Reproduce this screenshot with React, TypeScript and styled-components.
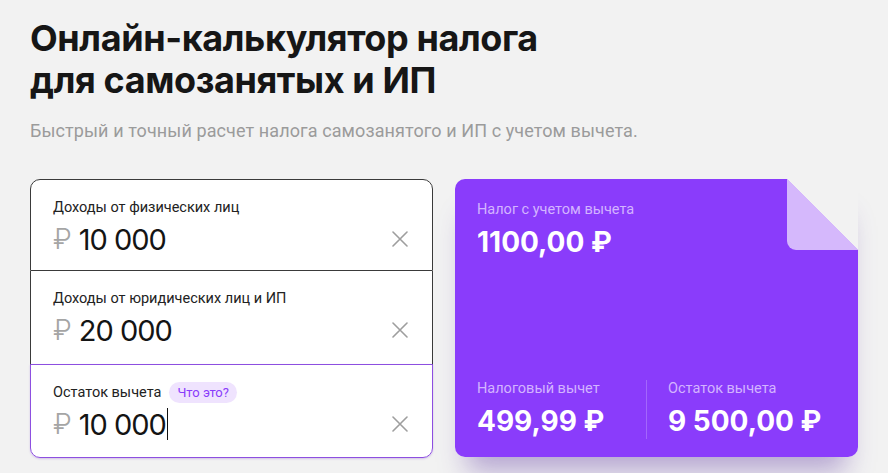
import React from "react";
import styled, { createGlobalStyle } from "styled-components";

const Global = createGlobalStyle`
  html, body { margin: 0; padding: 0; background: #f2f2f2; }
  body { font-family: Inter, "Noto Sans", sans-serif; color: #1a1a1a; }
  * { box-sizing: border-box; }
`;

const Page = styled.div`
  padding: 17px 30px 0 30px;
  width: 888px;
  height: 473px;
  overflow: hidden;
`;

const Title = styled.h1`
  margin: 0;
  font-size: 36px;
  line-height: 42px;
  font-weight: 700;
  letter-spacing: -0.4px;
  color: #161616;
`;

const Subtitle = styled.p`
  margin: 19px 0 0 0;
  font-size: 18px;
  line-height: 22px;
  letter-spacing: 0.1px;
  color: #9b9b9b;
  font-family: Roboto, "Noto Sans", sans-serif;
`;

const Grid = styled.div`
  margin-top: 37px;
  display: grid;
  grid-template-columns: 403px 403px;
  column-gap: 22px;
`;

const Inputs = styled.div`
  display: flex;
  flex-direction: column;
  border-radius: 10px;
  background: #fff;
`;

const Field = styled.div<{ $pos: "top" | "mid" | "bottom"; $active?: boolean }>`
  position: relative;
  height: ${(p) => (p.$pos === "top" ? 92 : 94)}px;
  padding: 17px 22px 0 22px;
  border: 1px solid ${(p) => (p.$active ? "#8d4fe0" : "#3a3a3a")};
  border-top-width: ${(p) => (p.$pos === "top" || p.$active ? 1 : 0)}px;
  border-radius: ${(p) =>
    p.$pos === "top" ? "10px 10px 0 0" : p.$pos === "bottom" ? "0 0 10px 10px" : "0"};
  margin-top: ${(p) => (p.$active ? -1 : 0)}px;
  box-shadow: ${(p) => (p.$active ? "0 1px 2px rgba(120,60,200,0.25)" : "none")};
`;

const LabelRow = styled.div`
  display: flex;
  align-items: center;
  gap: 8px;
  height: 20px;
`;

const Label = styled.span`
  font-size: 14.5px;
  color: #222;
  font-family: Roboto, "Noto Sans", sans-serif;
`;

const Pill = styled.span`
  display: inline-flex;
  align-items: center;
  height: 21px;
  padding: 0 8px;
  border-radius: 11px;
  background: #efe3fe;
  color: #8a3cfb;
  font-size: 13px;
  font-family: Roboto, "Noto Sans", sans-serif;
`;

const ValueRow = styled.div`
  display: flex;
  align-items: center;
  margin-top: 5px;
  height: 34px;
`;

const Ruble = styled.span`
  font-size: 28px;
  color: #a5a5a5;
  font-family: Inter, sans-serif;
  font-weight: 300;
  margin-right: 7px;
`;

const Value = styled.span`
  font-size: 29px;
  color: #141414;
  font-family: Inter, sans-serif;
  font-weight: 400;
  letter-spacing: -1px;
`;

const Caret = styled.span`
  display: inline-block;
  width: 1.5px;
  height: 32px;
  background: #111;
  margin-left: 1px;
`;

const Clear = styled.button`
  margin-left: auto;
  margin-right: 2px;
  border: none;
  background: none;
  padding: 0;
  width: 16px;
  height: 16px;
  display: flex;
  cursor: pointer;
`;

const Result = styled.div`
  position: relative;
  height: 278px;
  border-radius: 10px;
  background: linear-gradient(225deg, transparent 50.2px, #8a3cfb 50.2px);
  box-shadow: 0 26px 26px -12px rgba(90, 50, 160, 0.4);
  padding: 22px 22px 0 22px;
  display: flex;
  flex-direction: column;
  color: #fff;
`;

const Fold = styled.div`
  position: absolute;
  top: 0;
  right: 0;
  width: 71px;
  height: 71px;
  border-bottom-left-radius: 9px;
  background: linear-gradient(to bottom left, transparent 50%, #d5b8fc 50%);
`;

const SmallLabel = styled.div`
  font-size: 14.5px;
  line-height: 18px;
  color: #d3b4ff;
  font-family: Roboto, "Noto Sans", sans-serif;
`;

const Amount = styled.div`
  margin-top: 7px;
  font-size: 28px;
  line-height: 32px;
  font-weight: 700;
  letter-spacing: 0px;
`;

const Bottom = styled.div`
  margin-top: auto;
  margin-bottom: 18px;
  display: grid;
  grid-template-columns: 148px 1px 1fr;
  column-gap: 21px;
  align-items: stretch;
`;

const Divider = styled.div`
  background: rgba(255, 255, 255, 0.22);
  height: 59px;
  align-self: center;
`;

const Stat = styled.div`
  display: flex;
  flex-direction: column;
`;

const XIcon = () => (
  <svg width="16" height="16" viewBox="0 0 16 16">
    <path d="M1 1 L15 15 M15 1 L1 15" stroke="#9e9e9e" strokeWidth="1.6" strokeLinecap="round" />
  </svg>
);

export default function App() {
  return (
    <>
      <Global />
      <Page>
        <Title>
          Онлайн-калькулятор налога
          <br />
          для самозанятых и ИП
        </Title>
        <Subtitle>Быстрый и точный расчет налога самозанятого и ИП с учетом вычета.</Subtitle>
        <Grid>
          <Inputs>
            <Field $pos="top">
              <LabelRow>
                <Label>Доходы от физических лиц</Label>
              </LabelRow>
              <ValueRow>
                <Ruble>₽</Ruble>
                <Value>10 000</Value>
                <Clear aria-label="Очистить">
                  <XIcon />
                </Clear>
              </ValueRow>
            </Field>
            <Field $pos="mid">
              <LabelRow>
                <Label>Доходы от юридических лиц и ИП</Label>
              </LabelRow>
              <ValueRow>
                <Ruble>₽</Ruble>
                <Value>20 000</Value>
                <Clear aria-label="Очистить">
                  <XIcon />
                </Clear>
              </ValueRow>
            </Field>
            <Field $pos="bottom" $active>
              <LabelRow>
                <Label>Остаток вычета</Label>
                <Pill>Что это?</Pill>
              </LabelRow>
              <ValueRow>
                <Ruble>₽</Ruble>
                <Value>10 000</Value>
                <Caret />
                <Clear aria-label="Очистить">
                  <XIcon />
                </Clear>
              </ValueRow>
            </Field>
          </Inputs>
          <Result>
            <Fold />
            <SmallLabel>Налог с учетом вычета</SmallLabel>
            <Amount>1100,00 ₽</Amount>
            <Bottom>
              <Stat>
                <SmallLabel>Налоговый вычет</SmallLabel>
                <Amount>499,99 ₽</Amount>
              </Stat>
              <Divider />
              <Stat>
                <SmallLabel>Остаток вычета</SmallLabel>
                <Amount>9 500,00 ₽</Amount>
              </Stat>
            </Bottom>
          </Result>
        </Grid>
      </Page>
    </>
  );
}
